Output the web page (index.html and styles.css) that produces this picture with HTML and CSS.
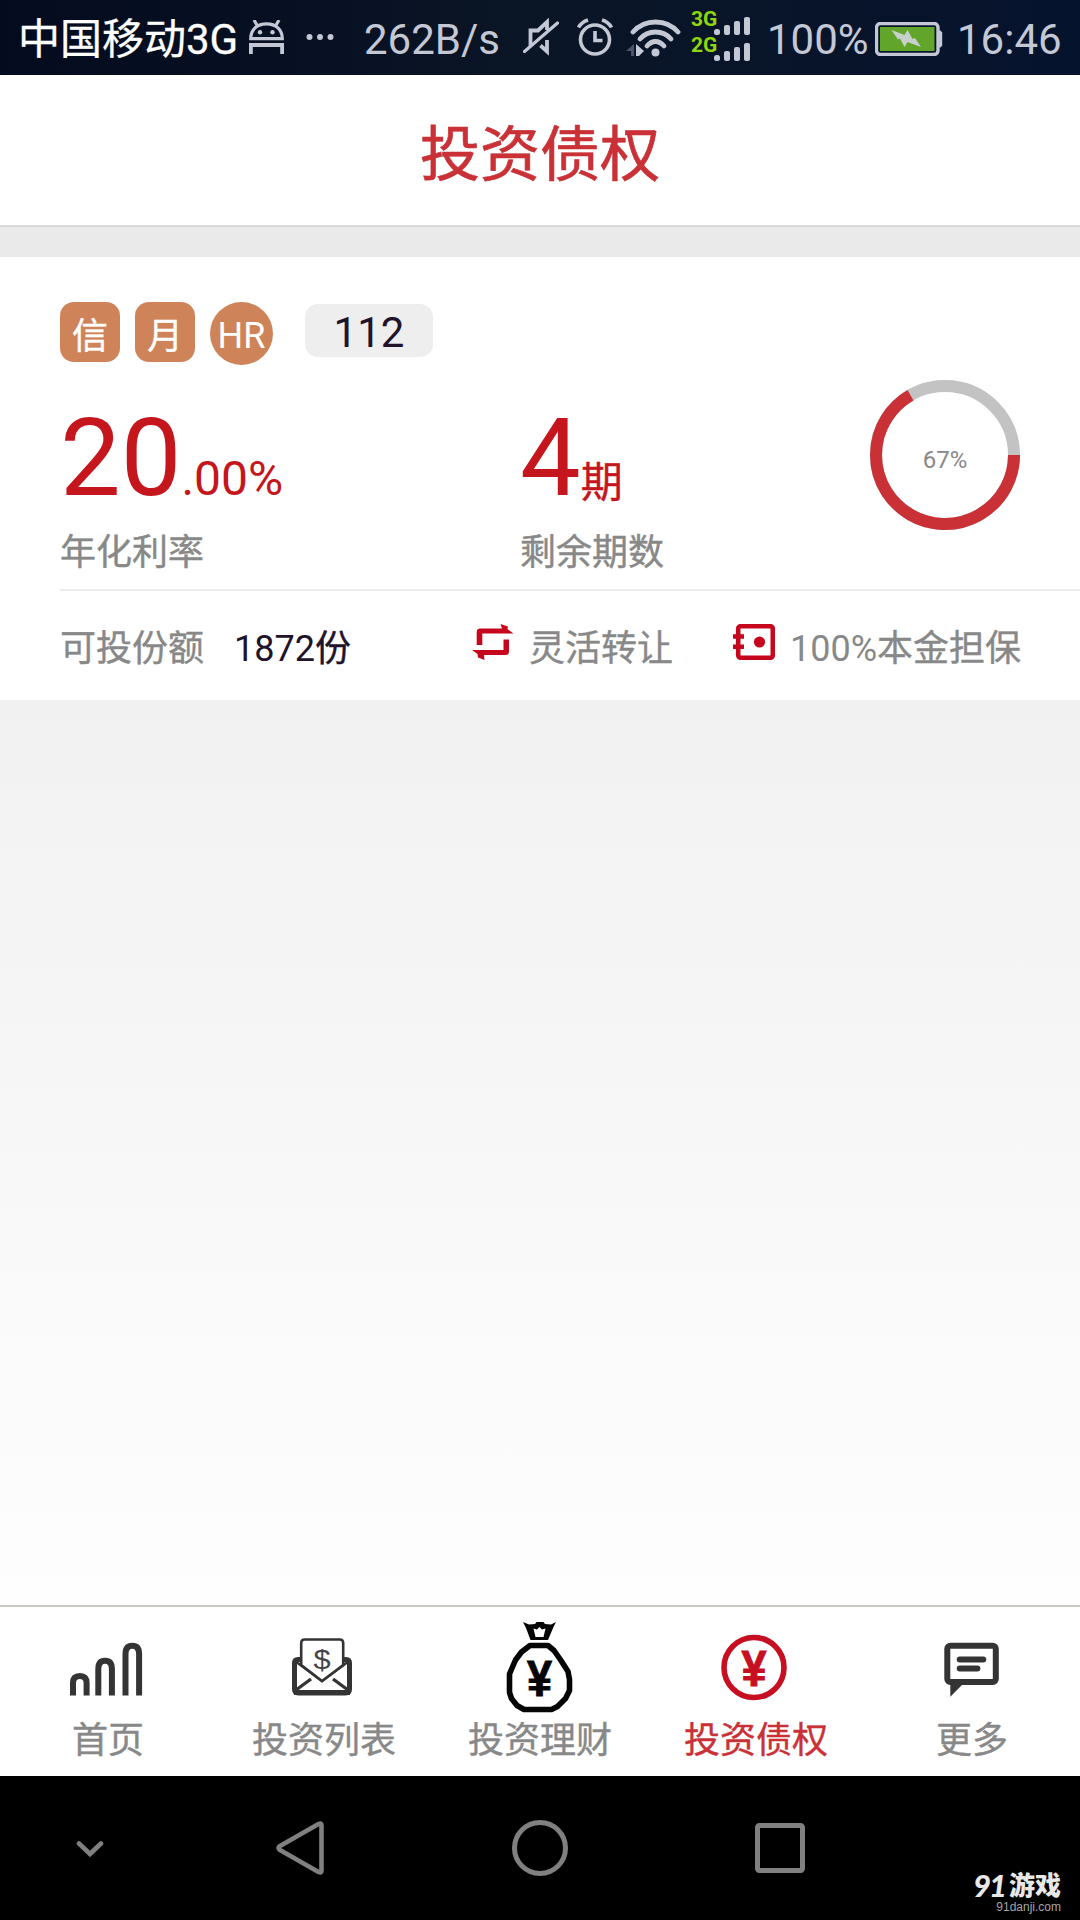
FILE: index.html
```html
<!DOCTYPE html>
<html lang="zh-CN">
<head>
<meta charset="utf-8">
<title>投资债权</title>
<link rel="stylesheet" href="styles.css">
</head>
<body>
<div class="screen">
  <div class="status">
    <span class="carrier">中国移动3G</span>
    <svg class="i-android" width="35" height="34" viewBox="0 0 35 34" fill="none" stroke="#c3c8d4" stroke-width="3.200"><path d="M5 0l3.200 5.500M30 0l-3.200 5.500" /><path d="M1.700 18.700C1.700 9.500 8 3.900 17.500 3.900S33.300 9.500 33.300 18.700Z"/><path d="M1.900 34V25h31.200v9" stroke-width="3.800"/><g fill="#c3c8d4" stroke="none"><circle cx="11" cy="12.300" r="2.200"/><circle cx="23.500" cy="12.300" r="2.200"/></g></svg>
    <svg class="i-dots" width="28" height="8" viewBox="0 0 28 8" fill="#c3c8d4"><circle cx="3.500" cy="4" r="3"/><circle cx="14" cy="4" r="3"/><circle cx="24.500" cy="4" r="3"/></svg>
    <span class="speed">262B/s</span>
    <svg class="i-mute" width="36" height="38" viewBox="0 0 36 38" fill="none" stroke="#c3c8d4" stroke-width="3.800"><path d="M7.500 28V12.500h7.500L24 4v8"/><path d="M24 22v11.500l-6.500-6"/><path d="M1.500 33.500L34.500 5" stroke-width="3.200" stroke-linecap="round"/></svg>
    <svg class="i-alarm" width="36" height="38" viewBox="0 0 36 38" fill="none" stroke="#c3c8d4" stroke-width="3.600"><circle cx="18" cy="21.500" r="14.500"/><path d="M18 13v9.500h7.500" stroke-width="3.600"/><path d="M1.500 9.500Q4.500 4 11 2M34.500 9.500Q31.500 4 25 2"/></svg>
    <svg class="i-wifi" width="55" height="38" viewBox="0 0 55 38" fill="none" stroke="#c3c8d4" stroke-width="4.800" stroke-linecap="round"><path d="M7 13Q16 3 29.500 3T52 13"/><path d="M14 20Q20 13 29.500 13T45 20"/><path d="M21 27Q25 22.500 29.500 22.500T38 27"/><circle cx="29.500" cy="33.500" r="4" fill="#c3c8d4" stroke="none"/><path d="M0 32l8-7v12H5v-5z" fill="#4c5567" stroke="none"/><path d="M10 25l8 7-5 5h-3z" fill="#c3c8d4" stroke="none"/></svg>
    <div class="sims">
      <div class="sim"><b>3G</b><svg width="37" height="18" viewBox="0 0 37 18" fill="#c3c8d4"><rect y="12" width="6" height="6" rx="2.500"/><rect x="10" y="8" width="6" height="10" rx="2"/><rect x="20" y="4" width="6" height="14" rx="2"/><rect x="30" width="6" height="18" rx="2"/></svg></div>
      <div class="sim"><b>2G</b><svg width="37" height="18" viewBox="0 0 37 18" fill="#c3c8d4"><rect y="12" width="6" height="6" rx="2.500"/><rect x="10" y="8" width="6" height="10" rx="2"/><rect x="20" y="4" width="6" height="14" rx="2"/><rect x="30" width="6" height="18" rx="2"/></svg></div>
    </div>
    <span class="level">100%</span>
    <svg class="i-battery" width="68" height="34" viewBox="0 0 68 34"><rect x="1.500" y="1.500" width="61.500" height="31" rx="4" fill="none" stroke="#c3c8d4" stroke-width="3.400"/><rect x="5" y="5" width="54.500" height="24" fill="#61a62b"/><path d="M64 8.500h1.500l1.700 2v13l-1.700 2H64z" fill="#c3c8d4"/><path d="M16.500 8l13 5 3-5 5 9 2.500-1 6 9-13.500-5-3 5-4.500-8.500-2 1z" fill="#c8d0cc"/></svg>
    <span class="clock">16:46</span>
  </div>

  <header class="title">投资债权</header>

  <main class="content">
    <section class="card">
      <div class="tags">
        <span class="tag">信</span>
        <span class="tag">月</span>
        <span class="tag round">HR</span>
        <span class="code">112</span>
      </div>
      <div class="stats">
        <div class="stat">
          <div class="figure">20<span class="decimal">.00%</span></div>
          <div class="caption">年化利率</div>
        </div>
        <div class="stat">
          <div class="figure">4<span class="unit">期</span></div>
          <div class="caption">剩余期数</div>
        </div>
        <div class="ring">
          <svg width="150" height="150" viewBox="0 0 150 150" fill="none" stroke-width="12"><circle cx="75" cy="75" r="69" stroke="#c3c3c3"/><path d="M144 75A69 69 0 1 1 40.500 15.200" stroke="#c93137"/></svg>
          <span class="percent">67%</span>
        </div>
      </div>
      <div class="facts">
        <div class="fact"><span class="label">可投份额</span><span class="amount">1872<span class="label">份</span></span></div>
        <div class="fact">
          <svg width="42" height="36" viewBox="0 0 42 36" fill="#c5061d"><path d="M4.700 21V8q0-3.500 3.500-3.500H30L28.500 0 36 2.500 35.500 5 41.500 9.500H10.300V21z"/><path d="M37 15.500V27.500q0 3.500-3.500 3.500H12l.5 5L6 33.500 5.500 30 0 26h31.500V15.500z"/></svg>
          <span class="label">灵活转让</span>
        </div>
        <div class="fact">
          <svg width="42" height="36" viewBox="0 0 42 36" fill="none" stroke="#c5061d"><rect x="5.200" y="2.200" width="34.600" height="31.600" rx="2.500" stroke-width="4.600"/><path d="M0 12.500h11M0 22.800h11" stroke-width="4.500"/><circle cx="26.500" cy="18" r="5.600" fill="#c5061d" stroke="none"/></svg>
          <span>100%<span class="label">本金担保</span></span>
        </div>
      </div>
    </section>
  </main>

  <nav class="tabs">
    <a class="tab">
      <svg width="216" height="111" viewBox="0 1 216 111" fill="none" stroke="#343434" stroke-width="6"><path d="M73 89.500V77q0-7 6.800-7t6.800 7v12.500M98.300 89.500V63q0-8.300 6.800-8.300t6.800 8.300v26.500M125.500 89.500V48q0-8.300 6.800-8.300t6.800 8.300v41.500"/></svg>
      <span>首页</span>
    </a>
    <a class="tab">
      <svg width="216" height="111" viewBox="0 1 216 111" fill="none" stroke="#343434"><path d="M84 53.500h-2q-3.500 0-3.500 3.500v26q0 4 4 4h47q4 0 4-4V57q0-3.500-3.500-3.500h-2" stroke-width="5"/><path d="M78 86.500h56" stroke-width="5"/><path d="M80 84l15-11M132 84l-15-11" stroke-width="3.400"/><path d="M79 55l27 20 27-20" stroke-width="2.600"/><path d="M85.200 59V37q0-3.500 3.500-3.500h35q3.500 0 3.500 3.500v22L106 75z" fill="#fff" stroke-width="2.600"/><text class="dollar" transform="translate(106 63) scale(1.100 1)">$</text></svg>
      <span>投资列表</span>
    </a>
    <a class="tab">
      <svg width="216" height="111" viewBox="0 1 216 111" fill="none" stroke="#050505"><path d="M98 39.500h18l6 5 7 10 7 11 1.500 8v11l-4 8-8 8-6 3H92l-7-4-5.500-7-2-6V68l6-14 6-8z" stroke-width="5.600" stroke-linejoin="round"/><path d="M91 16l6 2.500 6-.5 1.500-2h7l1.500 2 6 .5 5-2.500-2.500 5-5.500 13H98.500L94 22z" fill="#050505" stroke="none"/><path d="M101.500 22.500l3.500 1 2.500-2.500 2.500 2.500 3.500-1-2 8.500h-8z" fill="#fff" stroke="none"/><text class="yen" transform="translate(107.500 89.500) scale(.9 1)">¥</text></svg>
      <span>投资理财</span>
    </a>
    <a class="tab active">
      <svg width="216" height="111" viewBox="0 1 216 111" fill="none" stroke="#c70f22"><circle cx="106" cy="61.500" r="30" stroke-width="5.600"/><text class="yen" transform="translate(106 80) scale(.9 1)">¥</text></svg>
      <span>投资债权</span>
    </a>
    <a class="tab">
      <svg width="216" height="111" viewBox="0 1 216 111" fill="none" stroke="#343434" stroke-width="6"><rect x="83.300" y="39.700" width="48.500" height="36.300" rx="3"/><path d="M95.700 53.400h23.600M95.700 62.400h17.700" stroke-linecap="round"/><path d="M86.300 77v13.700L100 77z" fill="#343434" stroke="none"/></svg>
      <span>更多</span>
    </a>
  </nav>

  <div class="softkeys">
    <svg class="k-hide" width="28" height="16" viewBox="0 0 28 16" fill="none" stroke="#808080" stroke-width="4.600" stroke-linecap="round"><path d="M3 2.500l11 10.500 11-10.500"/></svg>
    <svg class="k-back" width="48" height="54" viewBox="0 0 48 54" fill="none" stroke="#808080" stroke-width="4.600" stroke-linejoin="round"><path d="M45.500 4.500q0-3-3-1.500L4 25q-3 2 0 4l38.500 22q3 1.500 3-1.500z"/></svg>
    <svg class="k-home" width="56" height="56" viewBox="0 0 56 56" fill="none" stroke="#808080" stroke-width="5"><circle cx="28" cy="28" r="25.500"/></svg>
    <svg class="k-recent" width="50" height="50" viewBox="0 0 50 50" fill="none" stroke="#808080" stroke-width="5"><rect x="2.500" y="2.500" width="45" height="45" rx="2"/></svg>
    <div class="watermark">
      <div class="brand"><span class="num">91</span>游戏</div>
      <div class="site">91danji.com</div>
    </div>
  </div>
</div>
</body>
</html>
```
FILE: styles.css
```css
* { box-sizing: border-box; }

body {
  margin: 0;
  font-family: Roboto, "Noto Sans CJK SC", sans-serif;
}

svg { display: block; flex: none; }

.screen {
  display: flex;
  flex-direction: column;
  width: 1080px;
  height: 1920px;
  overflow: hidden;
  background: #fff;
}

/* Status bar */
.status {
  display: flex;
  align-items: flex-start;
  height: 75px;
  padding-left: 18px;
  background: linear-gradient(90deg, #040b1e, #0a1526 50%, #06132d);
  color: #c3c8d4;
  font-size: 42px;
  line-height: 79px;
  white-space: nowrap;
}
.carrier { width: 231px; color: #fff; -webkit-text-stroke: .3px; }
.i-android { margin-top: 20px; }
.i-dots { margin: 33px 0 0 22px; }
.speed { width: 159px; margin-left: 30px; }
.i-mute { margin-top: 18px; }
.i-alarm { margin: 18px 0 0 18px; }
.i-wifi { margin: 19px 0 0 13px; }
.sims { margin: 11px 0 0 10px; }
.sim {
  display: flex;
  align-items: flex-start;
  height: 26px;
  color: #8fd60c;
  font-size: 21px;
  line-height: 16px;
}
.sim b { width: 23px; }
.sim svg { margin-top: 6px; }
.level { width: 108px; margin-left: 16px; }
.i-battery { margin-top: 22px; }
.clock { margin-left: 14px; }

/* Page header */
.title {
  height: 152px;
  padding-top: 6px;
  border-bottom: 2px solid #dadada;
  color: #c93137;
  font-size: 60px;
  line-height: 150px;
  text-align: center;
  -webkit-text-stroke: .7px;
}

.content {
  flex: 1;
  padding-top: 30px;
  background: linear-gradient(#eaeaea 0, #eaeaea 30px, #f1f1f1 473px, #fefefe 100%);
}

/* Investment card */
.card {
  height: 443px;
  padding: 45px 0 0 60px;
  background: #fff;
}
.tags {
  display: flex;
  align-items: flex-start;
  gap: 15px;
  height: 63px;
}
.tag {
  width: 60px;
  height: 60px;
  padding-top: 5px;
  border-radius: 14px;
  background: #ce8359;
  color: #fff;
  font-size: 36px;
  line-height: 60px;
  text-align: center;
  -webkit-text-stroke: .4px;
}
.tag.round {
  width: 63px;
  height: 63px;
  border-radius: 50%;
  padding-top: 4px;
  -webkit-text-stroke: 0;
}
.code {
  width: 128px;
  height: 53px;
  margin: 2px 0 0 17px;
  padding-top: 2px;
  border-radius: 13px;
  background: #eee;
  color: #20132a;
  font-size: 42px;
  line-height: 53px;
  text-align: center;
}
.stats {
  display: grid;
  grid-template-columns: 460px 350px 150px;
  height: 209px;
  margin-top: 15px;
}
.stat { padding-top: 24px; }
.figure {
  display: flex;
  align-items: baseline;
  height: 108px;
  color: #c4161c;
  font-size: 108px;
  line-height: 108px;
}
.decimal { font-size: 48px; line-height: 48px; }
.unit {
  position: relative;
  top: 2px;
  font-size: 42px;
  line-height: 42px;
  -webkit-text-stroke: .4px;
}
.caption {
  margin-top: 20px;
  color: #888;
  font-size: 36px;
  line-height: 43px;
  -webkit-text-stroke: .4px;
}
.ring {
  display: grid;
  height: 150px;
}
.ring > * { grid-area: 1 / 1; }
.percent {
  padding-top: 5px;
  color: #888;
  font-size: 24px;
  line-height: 150px;
  text-align: center;
}
.facts {
  display: grid;
  grid-template-columns: 412px 261px 1fr;
  height: 111px;
  border-top: 2px solid #ececec;
  padding-top: 5px;
  color: #888;
  font-size: 36px;
  line-height: 106px;
  white-space: nowrap;
}
.fact { display: flex; }
.fact svg { margin: 28px 15px 0 0; }
.label { -webkit-text-stroke: .4px; }
.amount { margin-left: 30px; color: #20132a; }

/* Bottom tabs */
.tabs {
  display: grid;
  grid-template-columns: repeat(5, 1fr);
  height: 171px;
  border-top: 2px solid #c8c9c2;
  background: #fff;
}
.tab {
  color: #888;
  font-size: 36px;
  line-height: 46px;
  text-align: center;
}
.tab.active { color: #c93137; }
.tab svg text { text-anchor: middle; }
.tab span { display: block; -webkit-text-stroke: .4px; }
.dollar {
  fill: #444;
  stroke: none;
  font: 28px "Liberation Sans", sans-serif;
}
.yen {
  fill: #050505;
  stroke-width: 1px;
  font: bold 50px "Liberation Sans", sans-serif;
}
.active .yen { fill: #c70f22; }

/* Android navigation keys */
.softkeys {
  display: flex;
  align-items: flex-start;
  height: 144px;
  padding-left: 76px;
  background: #000;
}
.k-hide { margin-top: 65px; }
.k-back { margin: 45px 0 0 172px; }
.k-home { margin: 44px 0 0 188px; }
.k-recent { margin: 47px 0 0 187px; }
.watermark {
  width: 256px;
  margin-top: 95px;
  color: #e8e8e8;
  text-align: right;
}
.brand {
  display: flex;
  justify-content: flex-end;
  height: 29px;
  font: 900 26px/26px "Noto Sans CJK SC", sans-serif;
}
.num {
  margin-right: 4px;
  font: italic 900 31px/28px Lato, sans-serif;
  letter-spacing: -2px;
}
.site {
  color: #a5a5a5;
  font: 12px/14px "Liberation Sans", sans-serif;
}
```
